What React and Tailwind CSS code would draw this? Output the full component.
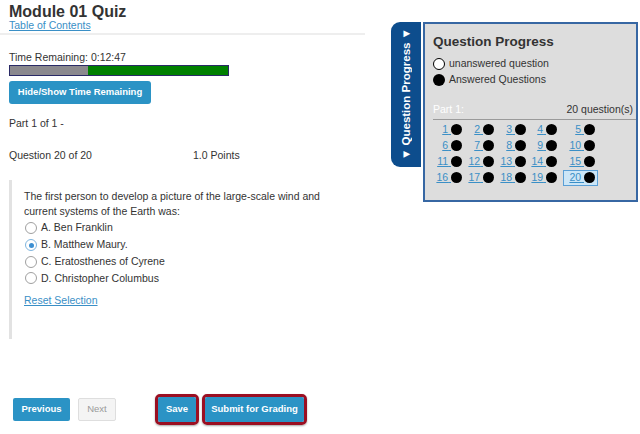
const options = [
  { id: 'A', text: 'A. Ben Franklin' },
  { id: 'B', text: 'B. Matthew Maury.' },
  { id: 'C', text: 'C. Eratosthenes of Cyrene' },
  { id: 'D', text: 'D. Christopher Columbus' },
]

const colWidths = ['w-[31px]', 'w-[32px]', 'w-[32px]', 'w-[31px]']

function Radio({ checked }) {
  return (
    <span
      className={
        'flex h-[12px] w-[12px] flex-none items-center justify-center rounded-full border bg-white ' +
        (checked ? 'border-[#7fb5de]' : 'border-[#a0a0a0]')
      }
    >
      {checked && <span className="h-[5px] w-[5px] rounded-full bg-[#3c8fd2]" />}
    </span>
  )
}

function QCell({ n, col, current }) {
  const dot = <span className="h-[11px] w-[11px] flex-none rounded-full bg-black" />
  const link = (
    <a href="#" className="text-[#3a8fc6] underline">
      {n}
      {'\u00a0'}
    </a>
  )
  if (col === 4) {
    return (
      <div
        className={
          'ml-[4px] flex h-[16px] w-[35px] items-center justify-end border pr-[2px] ' +
          (current ? 'border-[#5a9fd6] bg-[#cce6f7]' : 'border-transparent')
        }
      >
        {link}
        {dot}
      </div>
    )
  }
  return (
    <div className={'flex h-[16px] items-center justify-end pr-[2px] ' + colWidths[col]}>
      {link}
      {dot}
    </div>
  )
}

function ProgressPanel() {
  const rows = [0, 1, 2, 3]
  return (
    <div className="ml-[26px] mt-[22px] flex items-start">
      <div className="flex h-[145px] w-[30px] items-center justify-center rounded-l-[9px] bg-[#0d4d8d]">
        <span className="rotate-180 whitespace-nowrap text-[11.5px] font-bold leading-[12px] text-white [text-orientation:sideways] [writing-mode:vertical-rl]">
          ▼ Question Progress ▼
        </span>
      </div>
      <div className="ml-[2px] h-[180px] w-[215px] border-2 border-[#3767a3] bg-[#dddddd] pl-[8px] pr-[3px] pt-[10px] text-[#333]">
        <div className="text-[13.5px] font-bold leading-[16px]">Question Progress</div>
        <div className="mt-[6px] flex h-[16px] items-center gap-[4px] text-[10.5px]">
          <span className="h-[12px] w-[12px] rounded-full border border-black bg-white" />
          <span>unanswered question</span>
        </div>
        <div className="flex h-[16px] items-center gap-[4px] text-[10.5px]">
          <span className="h-[12px] w-[12px] rounded-full bg-black" />
          <span>Answered Questions</span>
        </div>
        <div className="mt-[15px] flex justify-between text-[10.5px] leading-[12px]">
          <span className="text-white">Part 1:</span>
          <span>20 question(s)</span>
        </div>
        <div className="-mr-[3px] mt-[3.5px] h-px bg-[#9a9a9a]" />
        <div className="mt-[2px] text-[10.5px]">
          {rows.map((r) => (
            <div key={r} className="flex">
              {[0, 1, 2, 3, 4].map((c) => {
                const n = r * 5 + c + 1
                return <QCell key={c} n={n} col={c} current={n === 20} />
              })}
            </div>
          ))}
        </div>
      </div>
    </div>
  )
}

export default function App() {
  return (
    <div className="h-[434px] w-[640px] overflow-hidden bg-white font-['Liberation_Sans',Arial,sans-serif] text-[#333]">
      <div className="flex items-start">
        <div className="w-[365px]">
          <div className="px-[9px]">
            <h1 className="pt-[4px] text-[16px] font-bold leading-[16px]">Module 01 Quiz</h1>
            <a href="#" className="block text-[10.5px] leading-[11px] text-[#3a8fc6] underline">
              Table of Contents
            </a>
          </div>
          <div className="mt-[2px] h-[2px] bg-[#eeeeee]" />
          <div className="px-[9px]">
            <div className="mt-[16px] text-[10.5px] leading-[12px]">Time Remaining: 0:12:47</div>
            <div className="mt-[2px] flex h-[11px] w-[220px] border border-[#2a2a66]">
              <div className="w-[78px] bg-[#8b898e]" />
              <div className="flex-1 bg-[#008000]" />
            </div>
            <button className="mt-[5px] h-[23px] w-[142px] rounded-[3px] bg-[#2b93c5] text-[9.5px] font-bold text-white">
              Hide/Show Time Remaining
            </button>
            <div className="mt-[13px] text-[10.5px] leading-[12px]">Part 1 of 1 -</div>
            <div className="mt-[20px] flex text-[10.5px] leading-[12px]">
              <span className="w-[184px]">Question 20 of 20</span>
              <span>1.0 Points</span>
            </div>
          </div>
          <div className="ml-[9px] mt-[19px] border-l-[3px] border-[#e2e2e2] pb-[33px] pl-[12px] pt-[9px] text-[10.5px]">
            <p className="leading-[15px]">
              The first person to develop a picture of the large-scale wind and
              <br />
              current systems of the Earth was:
            </p>
            <div className="mt-[1px]">
              {options.map((o) => (
                <label key={o.id} className="flex h-[16.7px] items-center">
                  <span className="ml-[1px]">
                    <Radio checked={o.id === 'B'} />
                  </span>
                  <span className="ml-[4px]">{o.text}</span>
                </label>
              ))}
            </div>
            <a href="#" className="mt-[7px] block leading-[12px] text-[#3a8fc6] underline">
              Reset Selection
            </a>
          </div>
        </div>
        <ProgressPanel />
      </div>
      <div className="mt-[55px] flex items-center pl-[13px]">
        <button className="h-[23px] w-[57px] rounded-[2px] bg-[#2b93c5] text-[9.5px] font-bold text-white">
          Previous
        </button>
        <button className="ml-[8px] h-[23px] w-[38px] rounded-[2px] border border-[#dedede] bg-[#f4f4f4] text-[9.5px] text-[#9a9a9a]">
          Next
        </button>
        <div className="ml-[39px] rounded-[5px] border-[3px] border-[#9b0f22] shadow-[0_1px_2px_rgba(0,0,0,0.35)]">
          <button className="block h-[25px] w-[38px] rounded-[2px] bg-[#2b93c5] text-[9.5px] font-bold text-white">
            Save
          </button>
        </div>
        <div className="ml-[3px] rounded-[5px] border-[3px] border-[#9b0f22] shadow-[0_1px_2px_rgba(0,0,0,0.35)]">
          <button className="block h-[25px] w-[99px] rounded-[2px] bg-[#2b93c5] text-[9.5px] font-bold text-white">
            Submit for Grading
          </button>
        </div>
      </div>
    </div>
  )
}
